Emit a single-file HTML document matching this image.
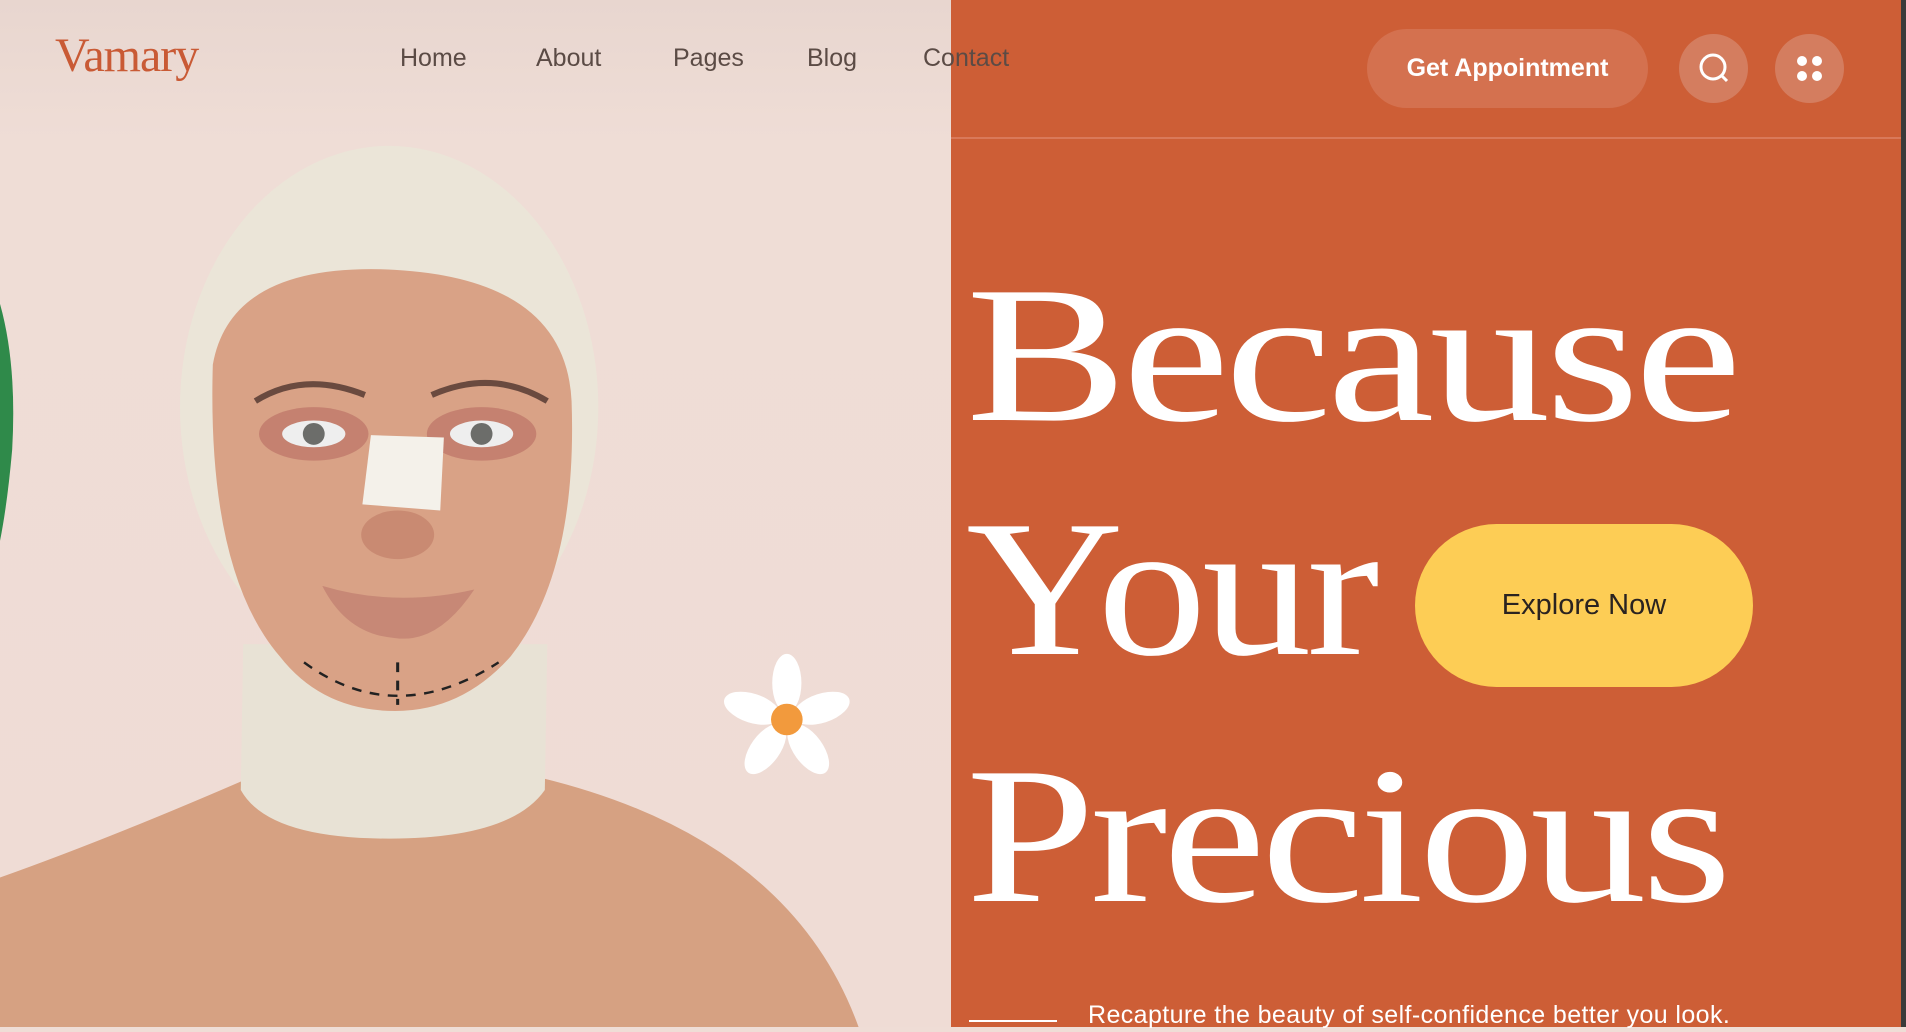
<!DOCTYPE html>
<html><head><meta charset="utf-8"><style>
*{margin:0;padding:0;box-sizing:border-box}
body{width:1906px;height:1027px;overflow:hidden;position:relative;background:#efddd6;font-family:"Liberation Sans",sans-serif}
.left{position:absolute;left:0;top:0;width:951px;height:1027px;background:linear-gradient(#e8d6cf,#efddd6 140px,#efdcd5)}
.right{position:absolute;left:951px;top:0;width:950px;height:1027px;background:#cd5e36}
.strip{position:absolute;left:1901px;top:0;width:5px;height:1027px;background:#3a3a3a}
.hline{position:absolute;left:951px;top:137px;width:950px;height:2px;background:#d9795a}
.logo{position:absolute;left:55px;top:28px;font-family:"Liberation Serif",serif;font-size:48px;color:#c95a35;letter-spacing:-1px}
.nav a{position:absolute;top:44px;font-size:25px;color:#5b4b45;text-decoration:none}
.btn{position:absolute;left:1367px;top:29px;width:281px;height:79px;border-radius:40px;background:#d4714f;color:#fff;font-weight:bold;font-size:25px;display:flex;align-items:center;justify-content:center}
.circ{position:absolute;top:34px;width:69px;height:69px;border-radius:50%;background:#d47d5f}
.h{position:absolute;left:966px;font-family:"Liberation Serif",serif;color:#fff;font-size:195px;line-height:1;letter-spacing:-4px;transform-origin:left top;white-space:nowrap}
.explore{position:absolute;left:1415px;top:524px;width:338px;height:163px;border-radius:82px;background:#fdcd55;color:#2a2320;font-size:29px;display:flex;align-items:center;justify-content:center}
.sub{position:absolute;left:1088px;top:1001px;color:#fff;font-size:25px;letter-spacing:.4px;white-space:nowrap}
.sl{position:absolute;left:969px;top:1020px;width:88px;height:2px;background:#fff}
</style></head><body>
<div class="left">
<svg width="951" height="1027" viewBox="0 0 782 845" preserveAspectRatio="none">
<path d="M0,250 Q14,300 10,370 Q6,415 0,445 Z" fill="#2f8a4a"/>
<path d="M0,845 L0,722 Q90,690 205,640 L445,640 Q650,690 706,845 Z" fill="#d6a182"/>
<path d="M200,530 L450,530 L448,650 Q420,690 320,690 Q220,690 198,650 Z" fill="#e8e2d5"/>
<ellipse cx="320" cy="335" rx="172" ry="215" fill="#ebe5d8"/>
<path d="M175,300 Q190,215 325,222 Q465,230 470,330 Q475,470 420,540 Q380,585 325,585 Q265,585 230,540 Q170,470 175,300 Z" fill="#d9a286"/>
<ellipse cx="258" cy="357" rx="45" ry="22" fill="#b86b63" opacity=".6"/>
<ellipse cx="396" cy="357" rx="45" ry="22" fill="#b86b63" opacity=".6"/>
<ellipse cx="258" cy="357" rx="26" ry="11" fill="#eee"/>
<ellipse cx="396" cy="357" rx="26" ry="11" fill="#eee"/>
<circle cx="258" cy="357" r="9" fill="#6c6d6a"/>
<circle cx="396" cy="357" r="9" fill="#6c6d6a"/>
<path d="M210,330 Q250,305 300,325" stroke="#6a4a3f" stroke-width="5" fill="none"/>
<path d="M355,325 Q405,303 450,330" stroke="#6a4a3f" stroke-width="5" fill="none"/>
<path d="M305,358 L365,360 L362,420 L298,415 Z" fill="#f4f1ea"/>
<ellipse cx="327" cy="440" rx="30" ry="20" fill="#c98a72"/>
<path d="M265,482 Q325,500 390,485 Q360,530 325,525 Q285,522 265,482 Z" fill="#c78876"/>
<path d="M250,545 Q325,600 410,545" stroke="#222" stroke-width="2" stroke-dasharray="8 7" fill="none"/>
<path d="M327,545 L327,580" stroke="#222" stroke-width="2.5" stroke-dasharray="8 7"/>
<g transform="translate(647,592)" fill="#fff">
<ellipse cx="0" cy="-30" rx="12" ry="24"/><ellipse cx="0" cy="-30" rx="12" ry="24" transform="rotate(72)"/><ellipse cx="0" cy="-30" rx="12" ry="24" transform="rotate(144)"/><ellipse cx="0" cy="-30" rx="12" ry="24" transform="rotate(216)"/><ellipse cx="0" cy="-30" rx="12" ry="24" transform="rotate(288)"/>
<circle r="13" fill="#f29a3d"/></g>
</svg>
</div>
<div class="right"></div>
<div class="strip"></div>
<div class="hline"></div>
<div class="logo">Vamary</div>
<div class="nav"><a style="left:400px">Home</a><a style="left:536px">About</a><a style="left:673px">Pages</a><a style="left:807px">Blog</a><a style="left:923px">Contact</a></div>
<div class="btn">Get Appointment</div>
<div class="circ" style="left:1679px"><svg width="69" height="69"><circle cx="34" cy="33" r="12" stroke="#fff" stroke-width="3" fill="none"/><path d="M43,42 L48,47" stroke="#fff" stroke-width="3"/></svg></div>
<div class="circ" style="left:1775px"><svg width="69" height="69"><circle cx="27" cy="27" r="5" fill="#fff"/><circle cx="42" cy="27" r="5" fill="#fff"/><circle cx="27" cy="42" r="5" fill="#fff"/><circle cx="42" cy="42" r="5" fill="#fff"/></svg></div>
<div class="h" style="top:258px;transform:scaleX(1.24)">Because</div>
<div class="h" style="top:492px;transform:scaleX(1.12)">Your</div>
<div class="h" style="top:739px;transform:scaleX(1.19)">Precious</div>
<div class="explore">Explore Now</div>
<div class="sl"></div>
<div class="sub">Recapture the beauty of self-confidence better you look.</div>
</body></html>
